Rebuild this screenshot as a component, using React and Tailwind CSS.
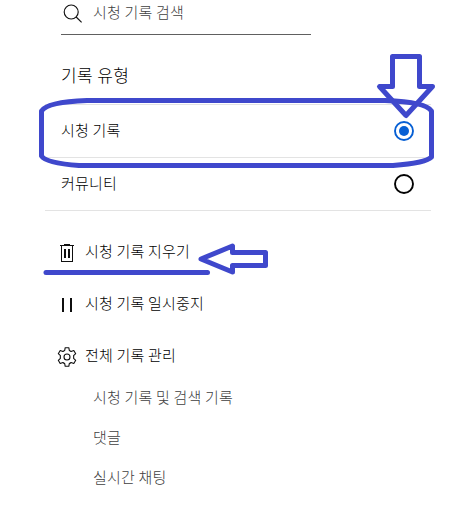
const SearchIcon = () => (
  <svg width="20" height="20" viewBox="0 0 20 20" fill="none" stroke="#111" strokeWidth="1.15">
    <circle cx="8.2" cy="8" r="7" />
    <path d="M13.2 13l5.4 5.3" />
  </svg>
);

const TrashIcon = () => (
  <svg width="14" height="18" viewBox="0 0 14 18" fill="none" stroke="#0f0f0f" shapeRendering="crispEdges">
    <path d="M0 1.5h14M4 .5h6M1.5 1v16.5h11V1" />
    <path d="M5 5v9M9 5v9" strokeWidth="2" />
  </svg>
);

const PauseIcon = () => (
  <svg width="10" height="14" viewBox="0 0 10 14" fill="#0f0f0f" shapeRendering="crispEdges">
    <path d="M0 0h2v14H0zM8 0h2v14H8z" />
  </svg>
);

const GearIcon = () => (
  <svg width="20" height="20" viewBox="0 0 20 20" fill="none" stroke="#0f0f0f" strokeWidth="1.1" strokeLinejoin="round">
    <circle cx="10" cy="10" r="3" />
    <path d="M8.2 .7h3.6l.5 2.7q1 .4 1.8 1.1l2.7-1 1.9 3.2-2.1 1.9q.2 1.4 0 2.8l2.1 1.9-1.9 3.2-2.7-1q-.8.7-1.8 1.1l-.5 2.7H8.2l-.5-2.7q-1-.4-1.8-1.1l-2.7 1-1.9-3.2 2.1-1.9q-.2-1.400 0-2.800L1.300 6.700l1.900-3.200 2.700 1q.8-.7 1.800-1.100z" />
  </svg>
);

const Radio = ({ checked }) => (
  <svg width="20" height="20" viewBox="0 0 20 20" fill="none" stroke={checked ? "#065fd4" : "#030303"} strokeWidth="1.9">
    <circle cx="10" cy="10" r="9" />
    {checked && <circle cx="10" cy="10" r="5" fill="#065fd4" stroke="none" />}
  </svg>
);

const TypeRow = ({ label, checked }) => (
  <div className="flex h-[53px] items-center justify-between border-t border-[#e3e3e3] pl-4 pr-[17px]">
    <span className="pb-0.5 text-black">{label}</span>
    <Radio checked={checked} />
  </div>
);

const Action = ({ icon, label }) => (
  <div className="flex h-[52px] items-center">
    <div className="flex w-11 justify-center pt-0.5">{icon}</div>
    <span className="-ml-1 pb-[3px] text-black">{label}</span>
  </div>
);

const Annotations = () => (
  <svg className="pointer-events-none absolute left-0 top-0" width="458" height="514" viewBox="0 0 458 514" fill="none" stroke="#3f48cc" strokeWidth="5" strokeLinejoin="round" strokeLinecap="round">
    <path d="M87 100.500H385Q426 102 431.500 111V157Q426 163 393 165.500H79Q46 163 41.500 156V111Q47 102 87 100.500z" />
    <path d="M392.500 56.500h27v30h13l-26.500 29-26.500-29h13z" />
    <path d="M46 272.500H207.500" />
    <path d="M201 259l31.500-13v6.500h33v13h-33v6.500z" />
  </svg>
);

export default function App() {
  return (
    <div className="relative h-[514px] w-[458px] overflow-hidden bg-white pl-[45px] text-[15px] font-light leading-5 tracking-[0.2px] [font-family:'Noto_Sans_CJK_KR',sans-serif]">
      <div className="ml-4 flex h-[35px] w-[250px] border-b border-[#606060] pl-[2px] pt-1">
        <SearchIcon />
        <span className="-mt-0.5 ml-[10px] text-[#404040]">시청 기록 검색</span>
      </div>
      <h2 className="ml-4 flex h-[69px] items-center pt-2.5 text-[17px] font-light tracking-[0.4px] text-black">기록 유형</h2>
      <div className="w-[386px] border-b border-[#e3e3e3]">
        <TypeRow label="시청 기록" checked />
        <TypeRow label="커뮤니티" />
      </div>
      <div className="pt-[15px]">
        <Action icon={<TrashIcon />} label="시청 기록 지우기" />
        <Action icon={<PauseIcon />} label="시청 기록 일시중지" />
        <Action icon={<GearIcon />} label="전체 기록 관리" />
      </div>
      <ul className="-mt-[5px] ml-12 text-[#404040]">
        <li className="flex h-10 items-center">시청 기록 및 검색 기록</li>
        <li className="flex h-10 items-center">댓글</li>
        <li className="flex h-10 items-center">실시간 채팅</li>
      </ul>
      <Annotations />
    </div>
  );
}
